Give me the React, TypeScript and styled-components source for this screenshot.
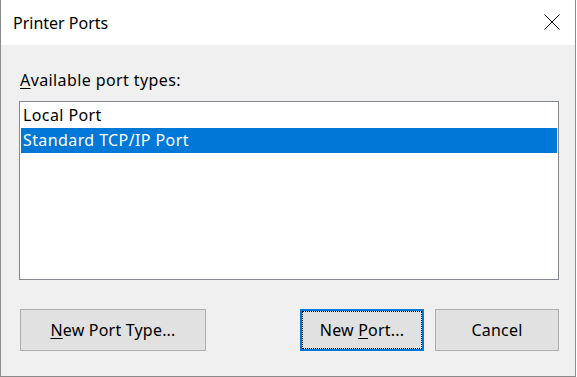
import React from "react";
import styled, { createGlobalStyle } from "styled-components";

const GlobalStyle = createGlobalStyle`
  html, body { margin: 0; padding: 0; background: #ffffff; }
  body { font-family: "Noto Sans", "Open Sans", sans-serif; color: #000; }
`;

const Window = styled.div`
  width: 576px;
  height: 377px;
  box-sizing: border-box;
  border: 1px solid #8a8a8a;
  border-top: none;
  display: flex;
  flex-direction: column;
  background: #f0f0f0;
`;

const TitleBar = styled.div`
  height: 45px;
  flex: none;
  background: #ffffff;
  display: flex;
  align-items: center;
  justify-content: space-between;
  padding: 0 15px 0 12px;
`;

const Title = styled.span`
  font-size: 16px;
  line-height: 20px;
`;

const CloseButton = styled.span`
  display: flex;
  width: 16px;
  height: 16px;
  margin-top: -1px;
`;

const Body = styled.div`
  flex: 1;
  display: flex;
  flex-direction: column;
  padding: 25px 16px 0 18px;
`;

const Label = styled.div`
  font-size: 16px;
  line-height: 20px;
  letter-spacing: 0.4px;
  padding-left: 1px;
  margin-bottom: 11px;
`;

const Mnemonic = styled.u`
  text-decoration-thickness: 1px;
  text-underline-offset: 2px;
`;

const ListBox = styled.div`
  height: 179px;
  box-sizing: border-box;
  border: 1px solid #828790;
  background: #ffffff;
  padding: 1px;
  display: flex;
  flex-direction: column;
`;

const ListItem = styled.div<{ $selected?: boolean }>`
  height: 25px;
  line-height: 25px;
  font-size: 16px;
  letter-spacing: 0.4px;
  padding-left: 2px;
  white-space: nowrap;
  background: ${(p) => (p.$selected ? "#0078d7" : "transparent")};
  color: ${(p) => (p.$selected ? "#ffffff" : "#000000")};
`;

const ButtonRow = styled.div`
  display: flex;
  margin-top: 29px;
  padding-left: 1px;
`;

const Spacer = styled.div`
  flex: 1;
`;

const Button = styled.button<{ $w: number; $focused?: boolean }>`
  width: ${(p) => p.$w}px;
  height: 42px;
  box-sizing: border-box;
  margin: 0;
  padding: 0;
  font-family: "Noto Sans", "Open Sans", sans-serif;
  font-size: 16px;
  line-height: 20px;
  letter-spacing: 0.2px;
  color: #000;
  background: #e1e1e1;
  border: ${(p) => (p.$focused ? "2px solid #0078d7" : "1px solid #adadad")};
  outline: ${(p) => (p.$focused ? "1px dotted #000" : "none")};
  outline-offset: -3px;
  border-radius: 0;
  & + & {
    margin-left: 11px;
  }
`;

export default function App() {
  return (
    <>
      <GlobalStyle />
      <Window>
        <TitleBar>
          <Title>Printer Ports</Title>
          <CloseButton>
            <svg width="16" height="16" viewBox="0 0 16 16" shapeRendering="crispEdges">
              <path d="M0.5 0.5 L15.5 15.5 M15.5 0.5 L0.5 15.5" stroke="#000" strokeWidth="1" fill="none" shapeRendering="geometricPrecision" />
            </svg>
          </CloseButton>
        </TitleBar>
        <Body>
          <Label>
            <Mnemonic>A</Mnemonic>vailable port types:
          </Label>
          <ListBox>
            <ListItem>Local Port</ListItem>
            <ListItem $selected>Standard TCP/IP Port</ListItem>
          </ListBox>
          <ButtonRow>
            <Button $w={186}>
              <Mnemonic>N</Mnemonic>ew Port Type...
            </Button>
            <Spacer />
            <Button $w={124} $focused>
              New <Mnemonic>P</Mnemonic>ort...
            </Button>
            <Button $w={124}>Cancel</Button>
          </ButtonRow>
        </Body>
      </Window>
    </>
  );
}
